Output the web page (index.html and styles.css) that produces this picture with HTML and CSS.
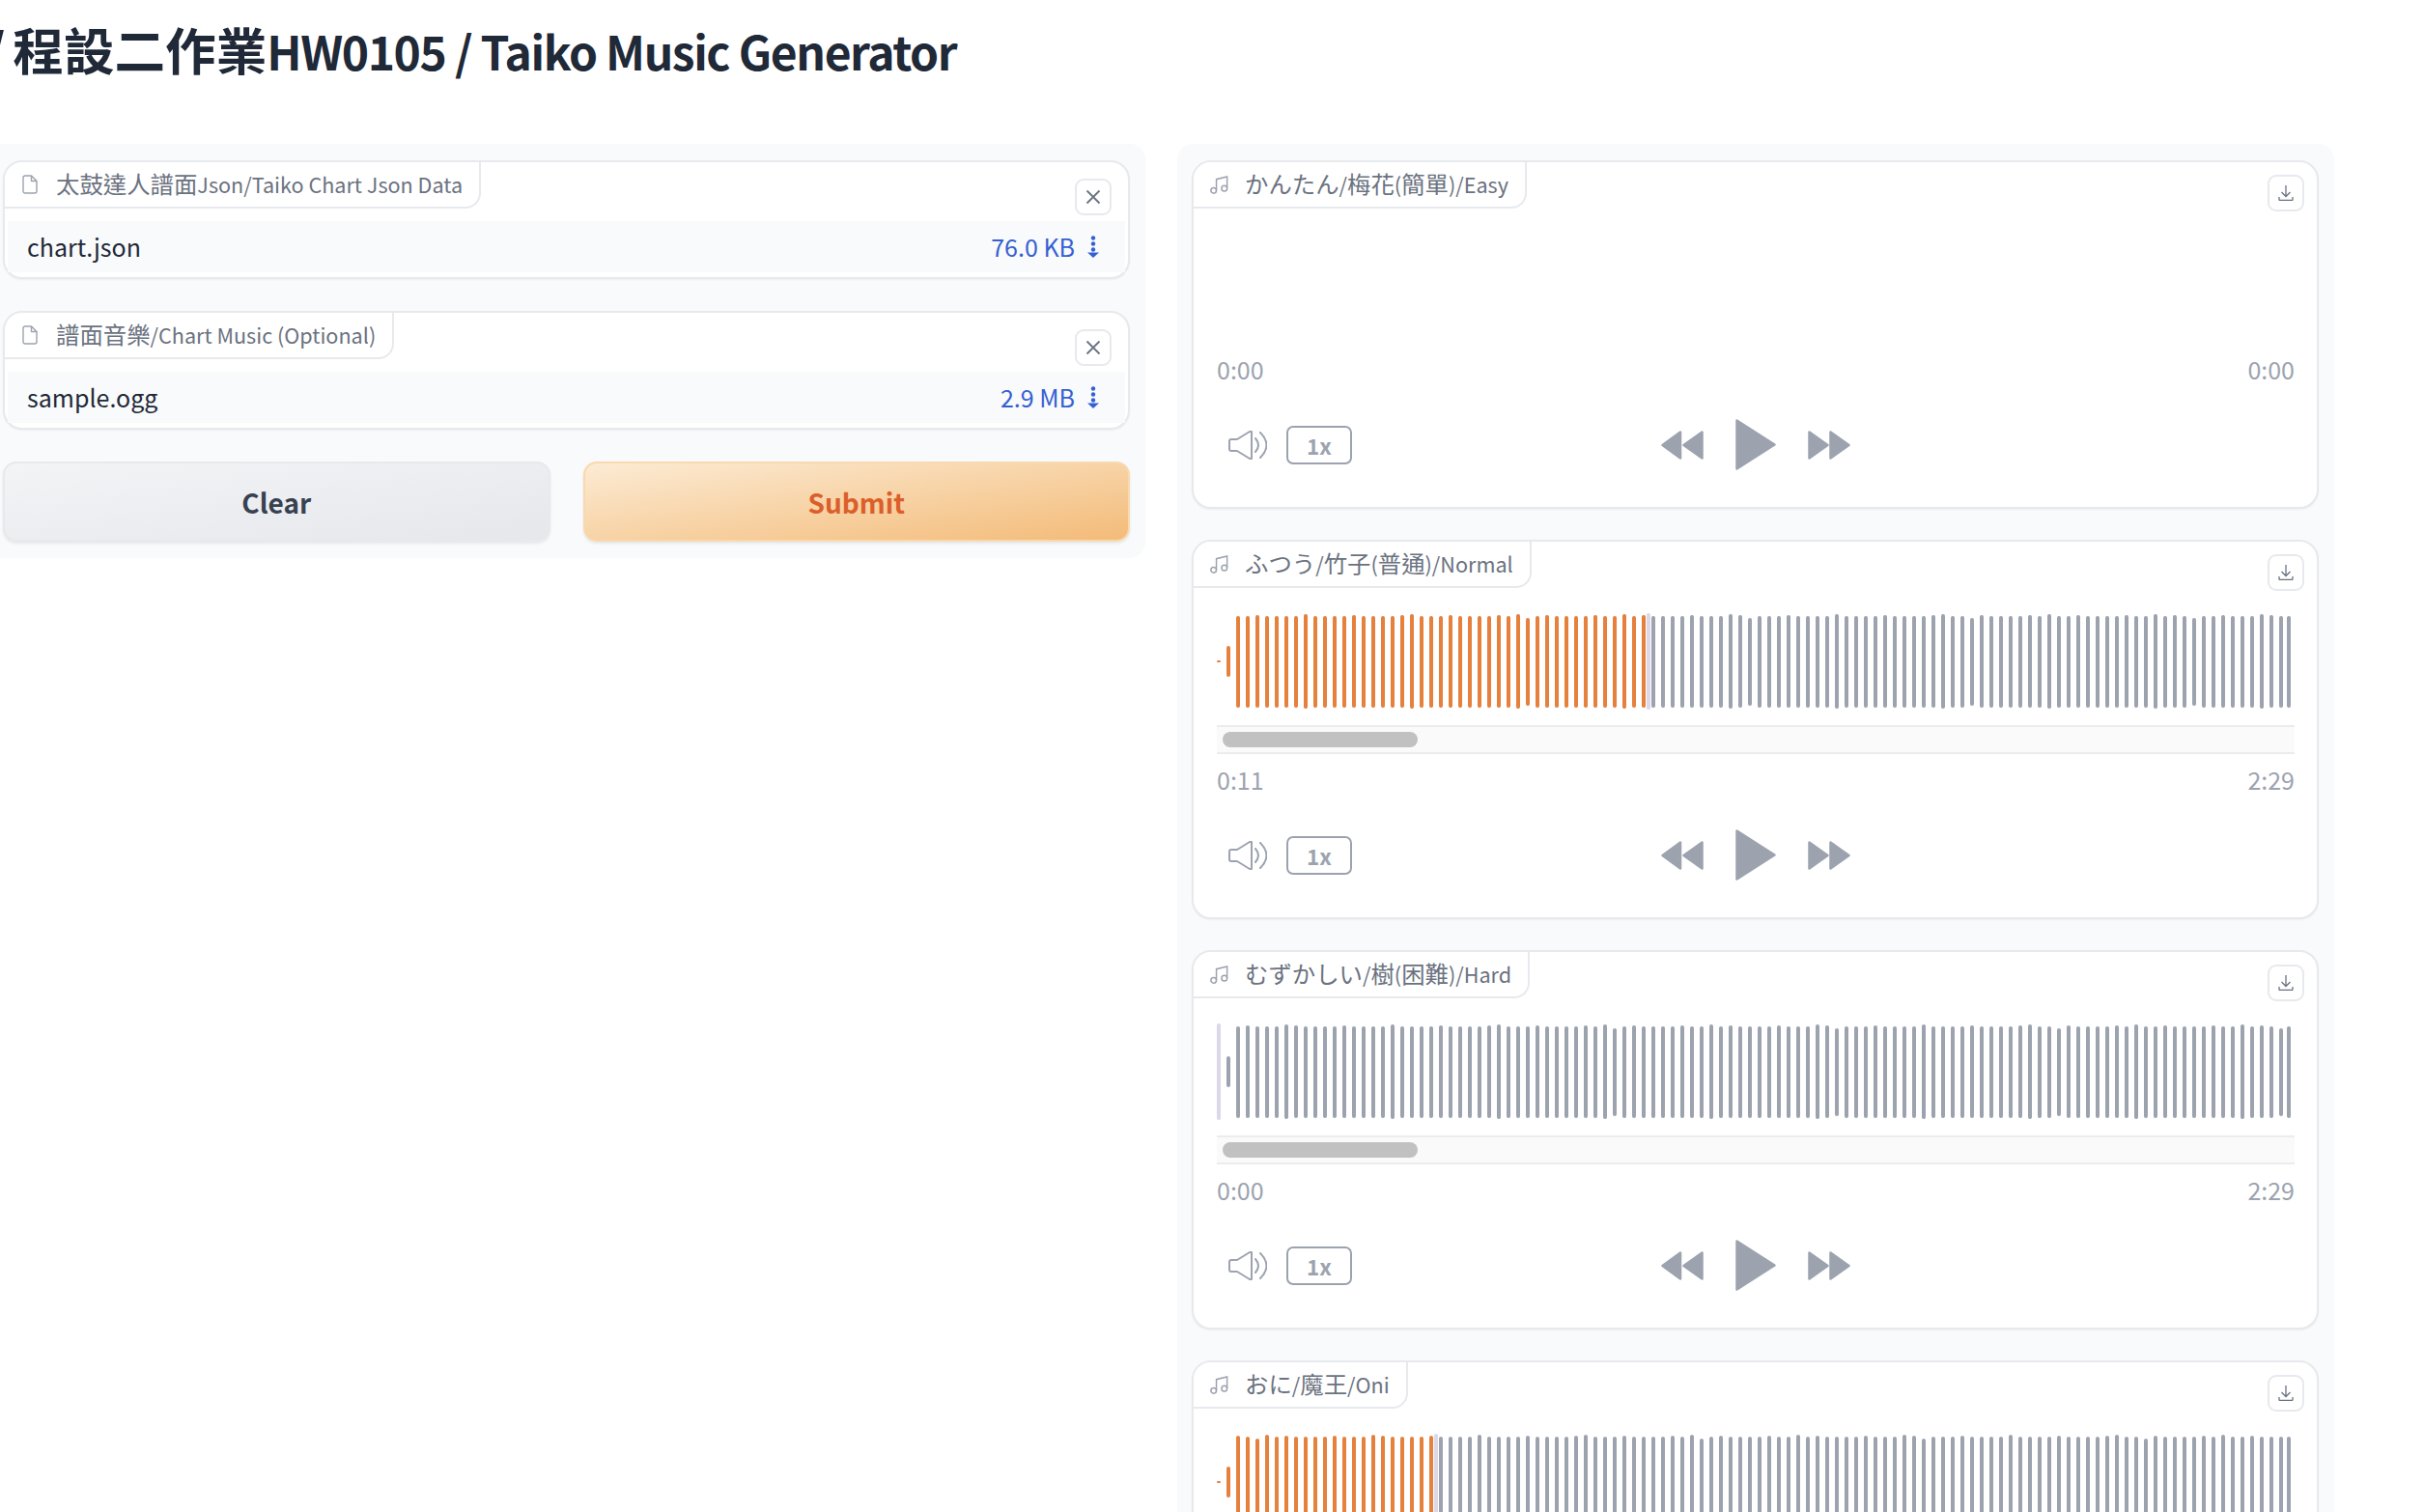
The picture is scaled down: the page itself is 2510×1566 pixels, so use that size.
FILE: index.html

```html
<!DOCTYPE html>
<html>
<head>
  <meta charset="utf-8">
  <meta name="viewport" content="width=device-width, initial-scale=1">
  <title>Taiko Music Generator</title>
  <link rel="stylesheet" href="styles.css">
  <script defer src="wave.js"></script>
</head>
<body>
<svg class="sprites" width="0" height="0">
  <symbol id="i-file" viewBox="0 0 16 20"><path d="M3 1h6.5L15 6.5V17a2 2 0 0 1-2 2H3a2 2 0 0 1-2-2V3a2 2 0 0 1 2-2zM9.500 1v5.500H15" fill="none" stroke="currentColor" stroke-width="1.400" stroke-linejoin="round"/></symbol>
  <symbol id="i-music" viewBox="0 0 18 18"><g fill="none" stroke="currentColor" stroke-width="1.400"><circle cx="3.500" cy="14.500" r="2.700"/><circle cx="14" cy="12.500" r="2.700"/><path d="M6.200 14.500V3.500L16.700 1v11.500"/></g></symbol>
  <symbol id="i-close" viewBox="0 0 16 16"><path d="M1.500 1.500l13 13M14.500 1.500l-13 13" stroke="currentColor" stroke-width="1.800" fill="none"/></symbol>
  <symbol id="i-save" viewBox="0 0 16 16"><path d="M8 0v11M3.500 7L8 11.500 12.500 7M1 12v2.500a1 1 0 0 0 1 1h12a1 1 0 0 0 1-1V12" stroke="currentColor" stroke-width="1.300" fill="none"/></symbol>
  <symbol id="i-more" viewBox="0 0 12 23"><circle cx="6" cy="2.500" r="2.200"/><circle cx="6" cy="8.500" r="2.200"/><circle cx="6" cy="14.500" r="2.200"/><path d="M0 17.500h12L6 23z"/></symbol>
  <symbol id="i-volume" viewBox="0 0 40 30"><path d="M3 9h6l13-8h2v28h-2L9 21H3a2 2 0 0 1-2-2v-8a2 2 0 0 1 2-2zM28 8q6 7 0 14M33 2q13 13 0 26" fill="none" stroke="currentColor" stroke-width="2" stroke-linecap="round" stroke-linejoin="round"/></symbol>
  <symbol id="i-back" viewBox="0 0 44 30"><path d="M1.500 15L20 1.500v27zM23.500 15L42.500 1.500v27z" fill="currentColor" stroke="currentColor" stroke-width="2.500" stroke-linejoin="round"/></symbol>
  <symbol id="i-play" viewBox="0 0 42 53"><path d="M1.500 1.500L40.500 26.500L1.500 51.500z" fill="currentColor" stroke="currentColor" stroke-width="2.500" stroke-linejoin="round"/></symbol>
  <symbol id="i-next" viewBox="0 0 44 30"><path d="M1.500 1.500L20.500 15L1.500 28.500zM23.500 1.500L42.500 15L23.500 28.500z" fill="currentColor" stroke="currentColor" stroke-width="2.500" stroke-linejoin="round"/></symbol>
</svg>

<h1 class="title"><span class="title-cut">/</span> 程設二作業<span class="title-latin">HW0105 / Taiko Music Generator</span></h1>

<div class="columns">
  <div class="panel panel-left">
    <div class="block file-block">
      <div class="label"><svg class="label-icon file-icon"><use href="#i-file"/></svg><span class="label-text"><span class="cjk">太鼓達人譜面</span>Json/Taiko Chart Json Data</span></div>
      <button class="icon-btn close-btn"><svg><use href="#i-close"/></svg></button>
      <div class="file-row">
        <span>chart.json</span>
        <span class="file-size">76.0 KB<svg class="more-icon"><use href="#i-more"/></svg></span>
      </div>
    </div>
    <div class="block file-block">
      <div class="label"><svg class="label-icon file-icon"><use href="#i-file"/></svg><span class="label-text"><span class="cjk">譜面音樂</span>/Chart Music (Optional)</span></div>
      <button class="icon-btn close-btn"><svg><use href="#i-close"/></svg></button>
      <div class="file-row">
        <span>sample.ogg</span>
        <span class="file-size">2.9 MB<svg class="more-icon"><use href="#i-more"/></svg></span>
      </div>
    </div>
    <div class="actions">
      <button class="btn btn-clear">Clear</button>
      <button class="btn btn-submit">Submit</button>
    </div>
  </div>

  <div class="panel panel-right">
    <div class="block audio-block">
      <div class="label"><svg class="label-icon music-icon"><use href="#i-music"/></svg><span class="label-text"><span class="cjk">かんたん</span>/<span class="cjk">梅花</span>(<span class="cjk">簡單</span>)/Easy</span></div>
      <button class="icon-btn save-btn"><svg><use href="#i-save"/></svg></button>
      <div class="wave"></div>
      <div class="times"><span>0:00</span><span>0:00</span></div>
      <div class="controls">
        <div class="controls-left"><svg class="vol-icon"><use href="#i-volume"/></svg><span class="speed">1x</span></div>
        <div class="controls-mid"><svg class="skip-icon"><use href="#i-back"/></svg><svg class="play-icon"><use href="#i-play"/></svg><svg class="skip-icon"><use href="#i-next"/></svg></div>
      </div>
    </div>

    <div class="block audio-block">
      <div class="label"><svg class="label-icon music-icon"><use href="#i-music"/></svg><span class="label-text"><span class="cjk">ふつう</span>/<span class="cjk">竹子</span>(<span class="cjk">普通</span>)/Normal</span></div>
      <button class="icon-btn save-btn"><svg><use href="#i-save"/></svg></button>
      <div class="wave" data-played="45" data-seed="1"></div>
      <div class="track"><div class="thumb"></div></div>
      <div class="times"><span>0:11</span><span>2:29</span></div>
      <div class="controls">
        <div class="controls-left"><svg class="vol-icon"><use href="#i-volume"/></svg><span class="speed">1x</span></div>
        <div class="controls-mid"><svg class="skip-icon"><use href="#i-back"/></svg><svg class="play-icon"><use href="#i-play"/></svg><svg class="skip-icon"><use href="#i-next"/></svg></div>
      </div>
    </div>

    <div class="block audio-block">
      <div class="label"><svg class="label-icon music-icon"><use href="#i-music"/></svg><span class="label-text"><span class="cjk">むずかしい</span>/<span class="cjk">樹</span>(<span class="cjk">困難</span>)/Hard</span></div>
      <button class="icon-btn save-btn"><svg><use href="#i-save"/></svg></button>
      <div class="wave" data-played="0" data-seed="2"></div>
      <div class="track"><div class="thumb"></div></div>
      <div class="times"><span>0:00</span><span>2:29</span></div>
      <div class="controls">
        <div class="controls-left"><svg class="vol-icon"><use href="#i-volume"/></svg><span class="speed">1x</span></div>
        <div class="controls-mid"><svg class="skip-icon"><use href="#i-back"/></svg><svg class="play-icon"><use href="#i-play"/></svg><svg class="skip-icon"><use href="#i-next"/></svg></div>
      </div>
    </div>

    <div class="block audio-block">
      <div class="label"><svg class="label-icon music-icon"><use href="#i-music"/></svg><span class="label-text"><span class="cjk">おに</span>/<span class="cjk">魔王</span>/Oni</span></div>
      <button class="icon-btn save-btn"><svg><use href="#i-save"/></svg></button>
      <div class="wave" data-played="23" data-seed="3"></div>
      <div class="track"><div class="thumb"></div></div>
      <div class="times"><span>0:05</span><span>2:29</span></div>
      <div class="controls">
        <div class="controls-left"><svg class="vol-icon"><use href="#i-volume"/></svg><span class="speed">1x</span></div>
        <div class="controls-mid"><svg class="skip-icon"><use href="#i-back"/></svg><svg class="play-icon"><use href="#i-play"/></svg><svg class="skip-icon"><use href="#i-next"/></svg></div>
      </div>
    </div>
  </div>
</div>
</body>
</html>
```

FILE: styles.css

```css
* {
  box-sizing: border-box;
}
html, body {
  height: 100vh;
  margin: 0;
  overflow: hidden;
}
body {
  background: #fff;
  color: #1f2937;
  font-family: "Noto Sans CJK TC", "Noto Sans CJK JP", sans-serif;
}
.sprites {
  position: absolute;
}
.title {
  margin: 0 0 58px -15px;
  padding-top: 11px;
  font-size: 52.6px;
  line-height: 78px;
  font-weight: 700;
  white-space: nowrap;
}
.title-cut {
  margin-right: -4px;
}
.title-latin {
  font-size: 48px;
  letter-spacing: -1.4px;
}

.columns {
  display: flex;
  gap: 33px;
  margin-left: -12px;
}
.panel {
  display: flex;
  flex-direction: column;
  flex: none;
  width: 1198px;
  gap: 32px;
  padding: 17px 16px 17px 15px;
  background: #f9fafb;
  border-radius: 16px;
}
.panel-left {
  align-self: flex-start;
  gap: 33px;
}

.block {
  position: relative;
  background: #fff;
  border: 2px solid #e7e9ed;
  border-radius: 20px;
  box-shadow: 0 1px 2px rgba(0, 0, 0, 0.05);
}
.label {
  position: absolute;
  top: 0;
  left: 0;
  display: flex;
  align-items: center;
  height: 48px;
  padding: 0 17px 0 18px;
  background: #fff;
  border-right: 2px solid #e7e9ed;
  border-bottom: 2px solid #e7e9ed;
  border-radius: 18px 0 16px 0;
  color: #6b7280;
  font-size: 21.6px;
  white-space: nowrap;
}
.label-text {
  padding-bottom: 3px;
}
.cjk {
  font-size: 24.4px;
}
.label-icon {
  flex: none;
  width: 18px;
  height: 18px;
  margin-right: 19px;
  color: #9ca3af;
}
.file-icon {
  width: 16px;
  height: 20px;
}
.music-icon {
  width: 19px;
  height: 19px;
  margin-left: -1px;
  margin-right: 17px;
}
.icon-btn {
  position: absolute;
  display: flex;
  align-items: center;
  justify-content: center;
  width: 38px;
  height: 38px;
  padding: 0;
  background: #fff;
  border: 2px solid #e7e9ed;
  border-radius: 9px;
  color: #6b7280;
}
.close-btn {
  top: 17px;
  right: 17px;
}
.close-btn svg {
  width: 16px;
  height: 16px;
}
.save-btn {
  top: 13px;
  right: 13px;
}
.save-btn svg {
  width: 16px;
  height: 16px;
}

.file-block {
  padding: 61px 3px 5px;
}
.file-row {
  display: flex;
  justify-content: space-between;
  align-items: center;
  height: 53px;
  padding: 0 27px 1px 20px;
  background: #f9fafb;
  font-size: 25px;
}
.file-size {
  display: flex;
  align-items: center;
  gap: 13px;
  color: #3560d4;
}
.more-icon {
  width: 12px;
  height: 23px;
  fill: #3560d4;
}

.actions {
  display: flex;
  gap: 34px;
}
.btn {
  flex: 1;
  height: 83px;
  border-radius: 14px;
  font-family: inherit;
  font-size: 28px;
  font-weight: 700;
  box-shadow: 0 2px 3px rgba(0, 0, 0, 0.08);
}
.btn-clear {
  background: linear-gradient(to bottom right, #f3f4f6, #e5e7eb);
  border: 2px solid #e7e9ed;
  color: #374151;
}
.btn-submit {
  background: linear-gradient(to bottom right, #fcebd4, #f3bb78);
  border: 2px solid #f8d9b0;
  color: #db5f2a;
}

.audio-block {
  padding: 74px 23px 49px 24px;
}
.wave {
  position: relative;
  display: flex;
  align-items: center;
  gap: 6px;
  height: 100px;
  margin-bottom: 16px;
}
.wave:empty {
  margin-bottom: 23px;
}
.bar {
  flex: none;
  width: 4px;
  background: #9ca3af;
  border-radius: 2px;
}
.bar:last-of-type {
  margin-left: -2px;
}
.bar.played {
  background: #e5803d;
}
.cursor {
  position: absolute;
  top: 0;
  width: 4px;
  height: 100%;
  background: #dcd8e8;
  border-radius: 2px;
}
.track {
  display: flex;
  align-items: center;
  height: 30px;
  margin-bottom: 9px;
  padding-left: 6px;
  background: #fafafa;
  border-top: 2px solid #ececec;
  border-bottom: 2px solid #ececec;
}
.thumb {
  width: 202px;
  height: 16px;
  background: #c1c1c1;
  border-radius: 8px;
}
.times {
  display: flex;
  justify-content: space-between;
  height: 34px;
  margin-bottom: 35px;
  color: #9ca3af;
  font-size: 25px;
  line-height: 34px;
}
.controls {
  display: grid;
  grid-template-columns: 1fr auto 1fr;
  align-items: center;
  height: 42px;
}
.controls-left {
  display: flex;
  align-items: center;
  gap: 20px;
  padding-left: 12px;
}
.controls-mid {
  display: flex;
  align-items: center;
  gap: 33px;
  color: #9ca3af;
}
.vol-icon {
  width: 40px;
  height: 30px;
  color: #9ca3af;
}
.skip-icon {
  width: 44px;
  height: 30px;
}
.play-icon {
  width: 42px;
  height: 53px;
}
.speed {
  display: flex;
  align-items: center;
  justify-content: center;
  width: 68px;
  height: 40px;
  border: 2px solid #9ca3af;
  border-radius: 7px;
  color: #9ca3af;
  font-size: 22.4px;
  font-weight: 700;
}
```

FILE: wave.js

```js
// fake peaks, the real page gets them from the decoded audio
function barHeight(i, seed) {
  if ((i * 7 + seed * 3) % 11 == 0) return 98;
  if ((i * 5 + seed) % 23 == 0) return 91;
  return (i + seed) % 5 == 0 ? 96 : 95;
}

document.querySelectorAll(".wave[data-seed]").forEach((wave) => {
  const played = Number(wave.dataset.played);
  const seed = Number(wave.dataset.seed);

  const cursor = document.createElement("div");
  cursor.className = "cursor";
  cursor.style.left = (played * 10 - (played ? 5 : 0)) + "px";
  wave.appendChild(cursor);

  for (let i = 0; i < 112; i++) {
    const bar = document.createElement("div");
    bar.className = i < played ? "bar played" : "bar";
    let h = barHeight(i, seed);
    if (i == 0) h = 2;
    if (i == 1) h = 32;
    bar.style.height = h + "px";
    wave.appendChild(bar);
  }
});
```
